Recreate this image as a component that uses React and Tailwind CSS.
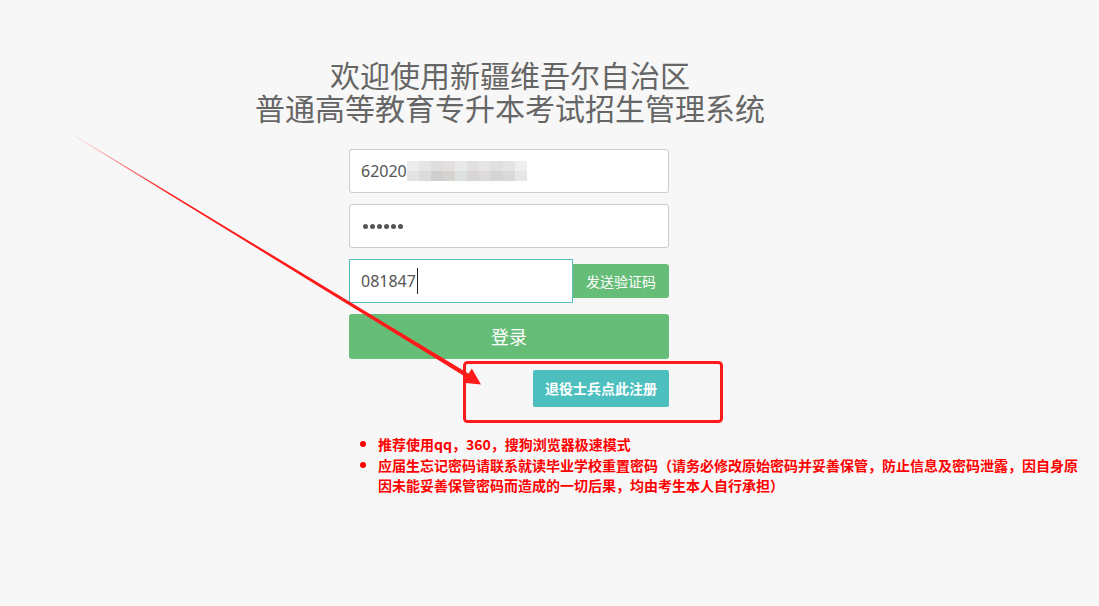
export default function App() {
  const blur = [
    ["#e4e2e2", "#ececec"],
    ["#dcdada", "#e6e4e4"],
    ["#cfcfcf", "#dedede"],
    ["#d6d2d0", "#e4e0df"],
    ["#dde1e1", "#e8eaea"],
    ["#d8d6d4", "#e2e0df"],
    ["#dcdadb", "#e6e4e5"],
    ["#d4d4d4", "#e0e0e0"],
    ["#d9d9d9", "#e4e4e4"],
    ["#e6e6e6", "#efefef"],
  ];
  return (
    <div
      className="relative w-[1099px] h-[606px] bg-[#f7f7f7] overflow-hidden"
      style={{ fontFamily: '"Noto Sans", "Noto Sans CJK SC", sans-serif' }}
    >
      <div className="w-[1018px] flex flex-col items-center pt-[58px]">
        <div
          className="w-[1018px] text-center text-[30px] leading-[33px] text-[#666]"
          style={{ fontFamily: '"Noto Sans CJK SC", sans-serif' }}
        >
          <div className="pl-[2px]">欢迎使用新疆维吾尔自治区</div>
          <div className="pl-[2px]">普通高等教育专升本考试招生管理系统</div>
        </div>

        <div className="w-[320px] mt-[25px] flex flex-col">
          <div className="h-[44px] bg-white border border-[#cccccc] rounded-[3px] flex items-center pl-[11px] text-[16px] text-[#555]">
            <span>62020</span>
            <div className="flex flex-col">
              <div className="flex h-[10px]">
                {blur.map((c, i) => (
                  <div key={i} className="w-[12px] h-full" style={{ background: c[1] }} />
                ))}
              </div>
              <div className="flex h-[10px]">
                {blur.map((c, i) => (
                  <div key={i} className="w-[12px] h-full" style={{ background: c[0] }} />
                ))}
              </div>
            </div>
          </div>

          <div className="mt-[11px] h-[44px] bg-white border border-[#cccccc] rounded-[3px] flex items-center pl-[13px] gap-[2px]">
            {[0, 1, 2, 3, 4, 5].map((i) => (
              <div key={i} className="w-[5px] h-[5px] rounded-full bg-[#555]" />
            ))}
          </div>

          <div className="mt-[11px] flex items-center">
            <div className="w-[224px] h-[44px] bg-white border border-[#57bcc4] flex items-center pl-[11px] text-[16px] text-[#555]">
              <span>081847</span>
              <span className="ml-[1px] w-px h-[26px] bg-[#222]" />
            </div>
            <div
              className="flex-1 h-[34px] bg-[#65bd77] rounded-r-[3px] flex items-center justify-center text-white text-[14px]"
              style={{ fontFamily: '"Noto Sans CJK SC", sans-serif' }}
            >
              发送验证码
            </div>
          </div>

          <div
            className="mt-[11px] h-[45px] bg-[#65bd77] rounded-[3px] flex items-center justify-center text-white text-[18px]"
            style={{ fontFamily: '"Noto Sans CJK SC", sans-serif' }}
          >
            登录
          </div>

          <div className="mt-[11px] flex justify-end">
            <div
              className="w-[136px] h-[37px] bg-[#4dbfbf] rounded-[2px] flex items-center justify-center text-white text-[14px] font-bold"
              style={{ fontFamily: '"Noto Sans CJK SC", sans-serif' }}
            >
              退役士兵点此注册
            </div>
          </div>

          <div
            className="mt-[27px] w-[740px] text-[14px] leading-[20px] font-bold text-[#ff0000]"
            style={{ fontFamily: '"Noto Sans CJK SC", sans-serif' }}
          >
            <div className="flex">
              <div className="w-[29px] shrink-0 flex justify-start pl-[11px] pt-[7px]">
                <div className="w-[6px] h-[6px] rounded-full bg-[#ff0000]" />
              </div>
              <div>推荐使用qq，360，搜狗浏览器极速模式</div>
            </div>
            <div className="flex mt-px">
              <div className="w-[29px] shrink-0 flex justify-start pl-[11px] pt-[7px]">
                <div className="w-[6px] h-[6px] rounded-full bg-[#ff0000]" />
              </div>
              <div className="w-[704px]">
                应届生忘记密码请联系就读毕业学校重置密码（请务必修改原始密码并妥善保管，防止信息及密码泄露，因自身原因未能妥善保管密码而造成的一切后果，均由考生本人自行承担）
              </div>
            </div>
          </div>
        </div>
      </div>

      <svg className="absolute inset-0 pointer-events-none" width="1099" height="606">
        <defs>
          <linearGradient id="fade" gradientUnits="userSpaceOnUse" x1="75" y1="136" x2="170" y2="194">
            <stop offset="0" stopColor="#ff1a1a" stopOpacity="0.1" />
            <stop offset="1" stopColor="#ff1a1a" stopOpacity="1" />
          </linearGradient>
        </defs>
        <polygon
          points="75,136.4 75.2,135.8 469.6,374.3 467.4,377.9"
          fill="url(#fade)"
        />
        <polygon points="481,384.5 463,382.8 471.8,368.6" fill="#ff1a1a" />
        <rect
          x="464.5"
          y="362.5"
          width="257"
          height="59"
          rx="3"
          fill="none"
          stroke="#ff1a1a"
          strokeWidth="3"
        />
      </svg>
    </div>
  );
}
